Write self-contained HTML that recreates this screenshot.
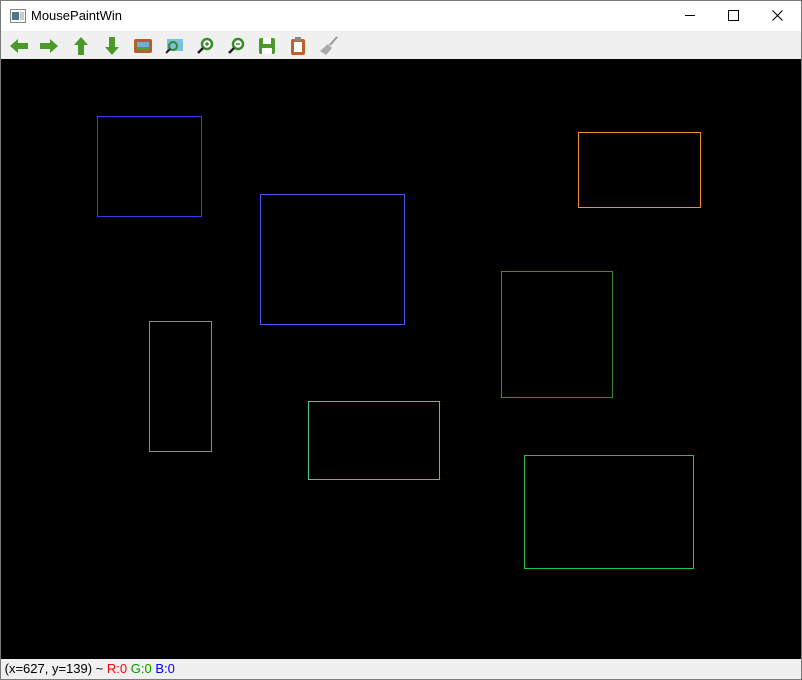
<!DOCTYPE html>
<html><head><style>
body{margin:0;width:802px;height:680px;overflow:hidden;background:#fff;font-family:"Liberation Sans",sans-serif;position:relative}
.win{position:absolute;left:0;top:0;width:800px;height:678px;border:1px solid #7a7a7a;background:#fff}
.title{position:absolute;left:0;top:0;width:800px;height:30px;background:#fff}
.tb{position:absolute;left:0;top:30px;width:800px;height:28px;background:#f0f0f0}
.canvas{position:absolute;left:0;top:58px;width:800px;height:600px;background:#000}
.status{position:absolute;left:0;top:658px;width:800px;height:20px;background:#f0f0f0;font-size:13px;line-height:20px}
.r{position:absolute;border:1px solid}
.ic{position:absolute;top:5px;width:20px;height:20px}
</style></head><body><div class="win">
<div class="title">
<svg style="position:absolute;left:9px;top:8px" width="16" height="14"><rect x="0.5" y="0.5" width="15" height="13" fill="#fff" stroke="#888"/><rect x="2" y="3" width="7" height="8" fill="#4a7a8a"/><rect x="10" y="3" width="4" height="8" fill="#ccc"/></svg>
<div style="position:absolute;left:30px;top:7px;font-size:13px">MousePaintWin</div>
<div style="position:absolute;left:684px;top:14px;width:10px;height:1px;background:#000"></div>
<div style="position:absolute;left:727px;top:9px;width:9px;height:9px;border:1px solid #000"></div>
<svg style="position:absolute;left:771px;top:9px" width="11" height="11"><path d="M0.5 0.5L10.5 10.5M10.5 0.5L0.5 10.5" stroke="#000" stroke-width="1.1"/></svg>
</div>
<div class="tb">
<svg class="ic" style="left:8px" viewBox="0 0 20 20"><path d="M1 10L9 3v4h10v6H9v4z" fill="#4a9a2a"/></svg>
<svg class="ic" style="left:38px" viewBox="0 0 20 20"><path d="M19 10L11 3v4H1v6h10v4z" fill="#4a9a2a"/></svg>
<svg class="ic" style="left:70px" viewBox="0 0 20 20"><path d="M10 1L3 9h4v10h6V9h4z" fill="#4a9a2a"/></svg>
<svg class="ic" style="left:101px" viewBox="0 0 20 20"><path d="M10 19L3 11h4V1h6v10h4z" fill="#4a9a2a"/></svg>
<svg class="ic" style="left:132px" viewBox="0 0 20 20"><rect x="1" y="3" width="18" height="14" rx="2" fill="#b0602a"/><rect x="4" y="6" width="12" height="8" fill="#6ab0e0"/><rect x="4" y="11" width="12" height="3" fill="#5a9a3a"/></svg>
<svg class="ic" style="left:163px" viewBox="0 0 20 20"><rect x="3" y="3" width="16" height="12" fill="#7ac0e0"/><circle cx="9" cy="10" r="4" fill="none" stroke="#3a8a2a" stroke-width="2"/><path d="M6 13l-4 4" stroke="#222" stroke-width="2"/></svg>
<svg class="ic" style="left:194px" viewBox="0 0 20 20"><circle cx="12" cy="8" r="5" fill="#fff" stroke="#3a8a2a" stroke-width="2.5"/><path d="M10 8h4M12 6v4" stroke="#3a8a2a" stroke-width="1.5"/><path d="M8 12l-5 5" stroke="#222" stroke-width="2.5"/></svg>
<svg class="ic" style="left:225px" viewBox="0 0 20 20"><circle cx="12" cy="8" r="5" fill="#fff" stroke="#3a8a2a" stroke-width="2.5"/><path d="M10 8h4" stroke="#3a8a2a" stroke-width="1.5"/><path d="M8 12l-5 5" stroke="#222" stroke-width="2.5"/></svg>
<svg class="ic" style="left:256px" viewBox="0 0 20 20"><rect x="2" y="2" width="16" height="16" rx="2" fill="#4a9a2a"/><rect x="6" y="2" width="8" height="6" fill="#fff"/><rect x="5" y="12" width="10" height="6" fill="#fff"/></svg>
<svg class="ic" style="left:287px" viewBox="0 0 20 20"><rect x="3" y="3" width="14" height="16" rx="2" fill="#c0602a"/><rect x="6" y="6" width="8" height="10" fill="#fff"/><rect x="7" y="1" width="6" height="4" fill="#888"/></svg>
<svg class="ic" style="left:318px" viewBox="0 0 20 20"><path d="M18 1l-7 8" stroke="#999" stroke-width="2"/><path d="M9 8l4 4-6 7-6-4z" fill="#aaa"/></svg>
</div>
<div class="canvas">
<div class="r" style="left:96px;top:57px;width:103px;height:99px;border-color:#3a3ae8"></div>
<div class="r" style="left:259px;top:135px;width:143px;height:129px;border-color:#4a5af0"></div>
<div class="r" style="left:577px;top:73px;width:121px;height:74px;border-color:#f09020"></div>
<div class="r" style="left:500px;top:212px;width:110px;height:125px;border-color:#3a8a3a"></div>
<div class="r" style="left:148px;top:262px;width:61px;height:129px;border-color:#8a8a8a"></div>
<div class="r" style="left:307px;top:342px;width:130px;height:77px;border-color:#40c8a0"></div>
<div class="r" style="left:523px;top:396px;width:168px;height:112px;border-color:#20c050"></div>
</div>
<div class="status">&nbsp;(x=627, y=139) ~ <span style="color:#f00">R:0</span> <span style="color:#090">G:0</span> <span style="color:#00f">B:0</span></div>
</div></body></html>
